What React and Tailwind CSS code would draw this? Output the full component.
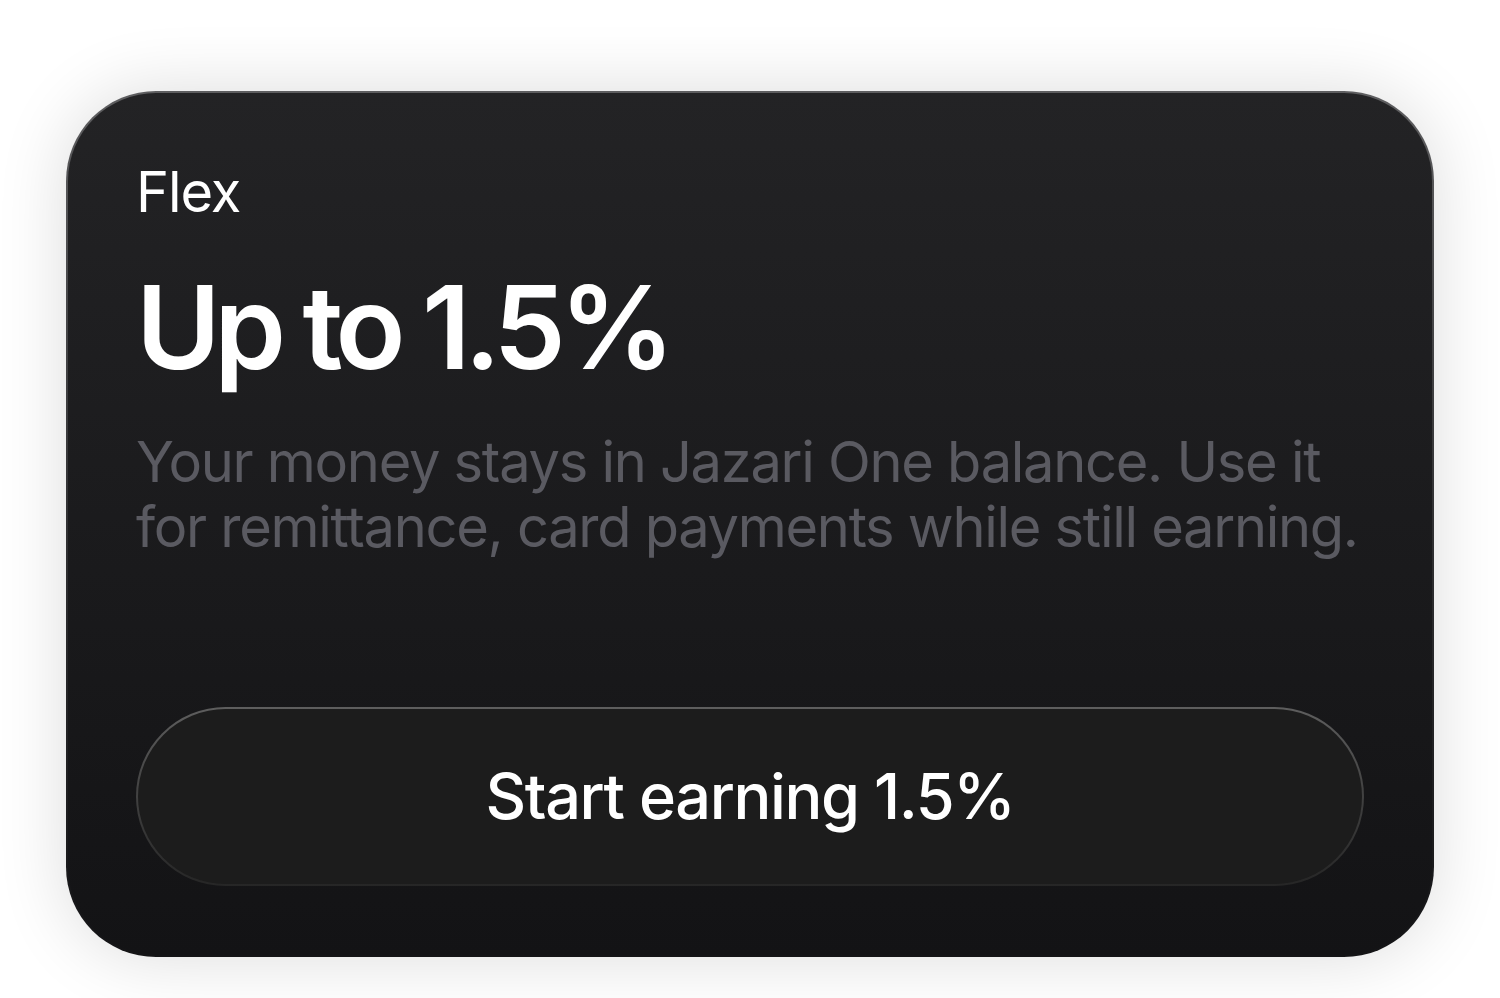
export default function App() {
  return (
    <div className="min-h-screen bg-white pl-[66px] pt-[91px]" style={{ fontFamily: 'Inter, "Noto Sans", sans-serif' }}>
      <div className="w-[1368px] rounded-[90px] bg-gradient-to-b from-[#5e5e60] via-[#303032] to-[#141416] p-[2px] shadow-[0_0_70px_rgba(0,0,0,0.14)]">
        <div className="flex h-[862px] flex-col justify-between rounded-[88px] bg-gradient-to-b from-[#232325] to-[#131315] px-[68px] pb-[69px] pt-[65px]">
          <div className="flex flex-col">
            <div className="text-[56px] leading-[68px] tracking-[-0.02em] text-white">Flex</div>
            <div className="mt-[44px] text-[115px] font-semibold leading-[116px] tracking-[-0.055em] text-white">Up to 1.5%</div>
            <p className="mt-[44px] text-[56px] leading-[65px] tracking-[-0.023em] text-[#5a5a61]">
              Your money stays in Jazari One balance. Use it for remittance, card payments while still earning.
            </p>
          </div>
          <div className="rounded-full bg-gradient-to-b from-[#5e5e5e] to-[#262626] p-[2px]">
            <button className="flex h-[175px] w-full items-center justify-center rounded-full bg-[#1c1c1c] text-[63px] font-medium tracking-[-0.022em] text-white">
              Start earning 1.5%
            </button>
          </div>
        </div>
      </div>
    </div>
  )
}
